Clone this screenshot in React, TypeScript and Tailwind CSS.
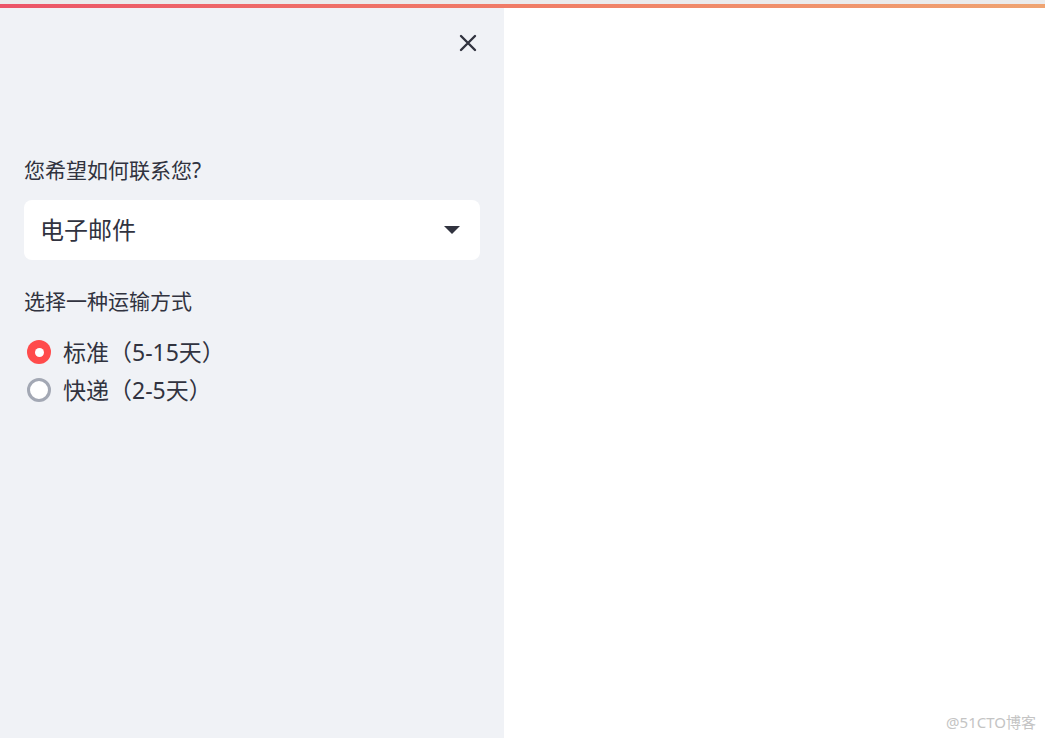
import { useState } from 'react';

const options = ['标准（5-15天）', '快递（2-5天）'];

export default function App() {
  const [shipping, setShipping] = useState(0);

  return (
    <div className="flex h-[738px] w-full flex-col overflow-hidden bg-white font-['Noto_Sans','Noto_Sans_CJK_SC',sans-serif] text-[#31333f]">
      {/* top decoration */}
      <div className="h-[4px] bg-[#ebebec]" />
      <div className="h-[4px] bg-gradient-to-r from-[#ec5468] via-[#f07c66] to-[#efa472]" />

      <div className="flex flex-1">
        {/* Sidebar */}
        <aside className="flex w-[504px] flex-col bg-[#f0f2f6] px-[24px]">
          <div className="flex justify-end pt-[26px] pr-[3px]">
            <svg width="18" height="18" viewBox="0 0 18 18" className="text-[#31333f]">
              <path d="M2 2 L16 16 M16 2 L2 16" stroke="currentColor" strokeWidth="2.4" strokeLinecap="round" />
            </svg>
          </div>

          <label className="mt-[103px] text-[21px] leading-[30px]">您希望如何联系您?</label>

          <div className="mt-[15px] flex h-[60px] items-center justify-between rounded-[8px] bg-white pl-[16px] pr-[20px]">
            <span className="text-[24px] leading-[30px]">电子邮件</span>
            <svg width="16" height="8" viewBox="0 0 16 8">
              <path d="M0 0 L16 0 L8 8 Z" fill="#31333f" />
            </svg>
          </div>

          <label className="mt-[26px] text-[21px] leading-[30px]">选择一种运输方式</label>

          <div className="mt-[17px] flex flex-col">
            {options.map((opt, i) => (
              <button
                key={opt}
                onClick={() => setShipping(i)}
                className="flex h-[38px] items-center gap-[12px] pl-[3px] text-left"
              >
                {shipping === i ? (
                  <span className="flex h-[24px] w-[24px] items-center justify-center rounded-full bg-[#ff4b4b]">
                    <span className="h-[9px] w-[9px] rounded-full bg-white" />
                  </span>
                ) : (
                  <span className="h-[24px] w-[24px] rounded-full border-[3px] border-[#a3a8b4] bg-white" />
                )}
                <span className="text-[23px] leading-[30px]">{opt}</span>
              </button>
            ))}
          </div>
        </aside>

        {/* Main */}
        <main className="relative flex-1 bg-white">
          <span className="absolute bottom-[5px] right-[9px] text-[15px] text-[#c4c4c4]">@51CTO博客</span>
        </main>
      </div>
    </div>
  );
}
